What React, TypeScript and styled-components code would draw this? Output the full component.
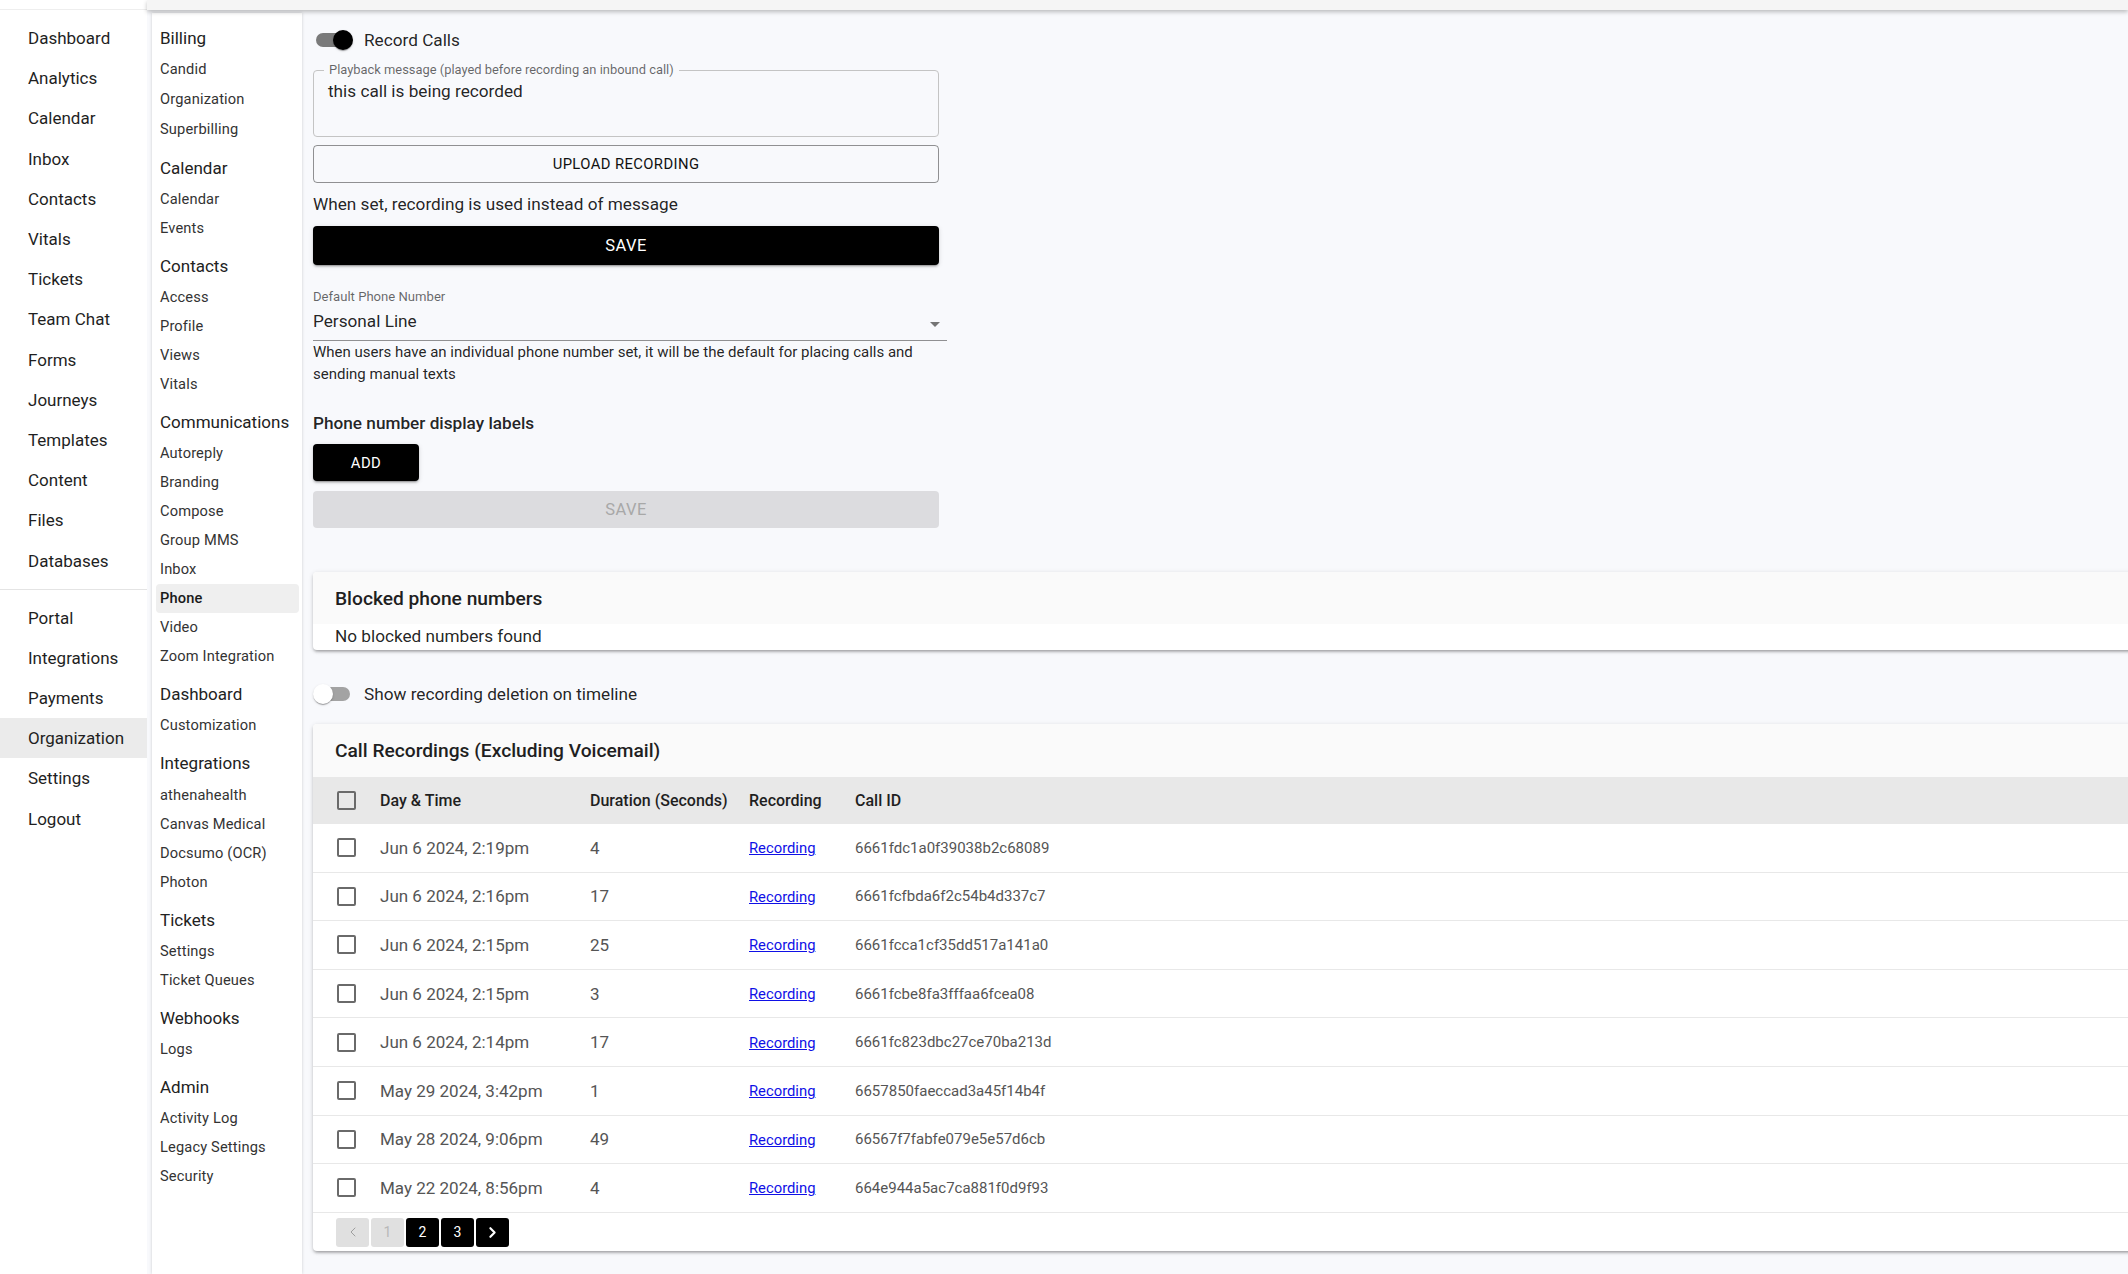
import React from "react";
import styled, { createGlobalStyle } from "styled-components";
import {
  LayoutDashboard,
  TrendingUp,
  Calendar,
  Inbox,
  Users,
  Activity,
  Ticket,
  MessageSquare,
  FileText,
  Map,
  LayoutTemplate,
  Image,
  Folder,
  Database,
  Globe,
  Plug,
  CreditCard,
  Building2,
  Settings,
  LogOut,
  ChevronLeft,
  ChevronRight,
} from "lucide-react";

const GlobalStyle = createGlobalStyle`
  html, body {
    margin: 0;
    padding: 0;
    height: 100%;
    overflow: hidden;
  }
  body {
    font-family: Roboto, "Noto Sans", "Liberation Sans", sans-serif;
    background: #f8f9fc;
    color: rgba(0, 0, 0, 0.87);
  }
`;

const Page = styled.div`
  display: flex;
  height: 100vh;
`;

const LeftNav = styled.nav`
  width: 147px;
  flex-shrink: 0;
  background: #fff;
  overflow: hidden;
`;

const NavTopStrip = styled.div`
  height: 10px;
  box-sizing: border-box;
  border-bottom: 1px solid #eeeeee;
`;

const NavList = styled.div`
  padding-top: 8px;
`;

const NavItem = styled.div<{ $active?: boolean }>`
  height: 40.2px;
  display: flex;
  align-items: center;
  font-size: 17px;
  color: #1f1f1f;
  background: ${(p) => (p.$active ? "#ebebeb" : "transparent")};
  white-space: nowrap;
`;

const NavIcon = styled.span`
  display: flex;
  width: 24px;
  margin-left: -22px;
  margin-right: 26px;
  color: #a8a8a8;
`;

const NavDivider = styled.div`
  height: 1px;
  background: #e4e4e4;
  margin: 8px 0;
`;

const RightCol = styled.div`
  flex: 1;
  min-width: 0;
  display: flex;
  flex-direction: column;
`;

const TopStrip = styled.div`
  height: 10px;
  flex-shrink: 0;
  background: #f5f5f5;
  box-shadow: 0 2px 4px rgba(0, 0, 0, 0.25);
  position: relative;
  z-index: 2;
`;

const Body = styled.div`
  flex: 1;
  min-height: 0;
  display: flex;
`;

const SubNav = styled.aside`
  width: 150px;
  flex-shrink: 0;
  margin: 3px 0 0 5px;
  padding-top: 8px;
  background: #fff;
  box-shadow: 0 0 3px rgba(0, 0, 0, 0.18);
`;

const SubSection = styled.div`
  margin-bottom: 6px;
`;

const SubHeader = styled.div`
  height: 34.2px;
  line-height: 34.2px;
  padding-left: 8px;
  font-size: 17px;
  color: #222;
`;

const SubItem = styled.div<{ $active?: boolean; $tall?: boolean }>`
  height: ${(p) => (p.$tall ? 29.8 : 29)}px;
  line-height: ${(p) => (p.$tall ? 29.8 : 29)}px;
  margin: 0 3px 0 4px;
  padding-left: 4px;
  border-radius: 4px;
  font-size: 14.65px;
  letter-spacing: 0.15px;
  color: ${(p) => (p.$active ? "#1a1a1a" : "#333")};
  font-weight: ${(p) => (p.$active ? 500 : 400)};
  background: ${(p) => (p.$active ? "#efefef" : "transparent")};
  white-space: nowrap;
`;

const Main = styled.main`
  flex: 1;
  min-width: 0;
  padding: 11px 0 0 11px;
  display: flex;
  flex-direction: column;
  align-items: flex-start;
`;

const SwitchRow = styled.div<{ $mt?: number }>`
  display: flex;
  align-items: center;
  height: 38px;
  margin-top: ${(p) => p.$mt ?? 0}px;
`;

const SwitchTrack = styled.span<{ $on?: boolean }>`
  position: relative;
  width: 34px;
  height: 14px;
  margin-left: 3px;
  border-radius: 7px;
  background: ${(p) => (p.$on ? "#7a7a7a" : "#a3a3a3")};
`;

const SwitchThumb = styled.span<{ $on?: boolean }>`
  position: absolute;
  top: -3px;
  left: ${(p) => (p.$on ? 17 : -3)}px;
  width: 20px;
  height: 20px;
  border-radius: 50%;
  background: ${(p) => (p.$on ? "#000" : "#fff")};
  box-shadow: 0 2px 1px -1px rgba(0, 0, 0, 0.2), 0 1px 1px rgba(0, 0, 0, 0.14),
    0 1px 3px rgba(0, 0, 0, 0.12);
`;

const SwitchLabel = styled.span`
  margin-left: 14px;
  font-size: 17.2px;
`;

const Fieldset = styled.fieldset`
  width: 626px;
  box-sizing: border-box;
  margin: 4px 0 0;
  padding: 0 14px;
  border: 1px solid #c4c4c4;
  border-radius: 4px;
  min-width: 0;
`;

const Legend = styled.legend`
  font-size: 12.9px;
  line-height: 14px;
  color: rgba(0, 0, 0, 0.6);
  padding: 0 5px;
  margin-left: -4px;
`;

const FieldValue = styled.div`
  height: 59px;
  box-sizing: border-box;
  padding-top: 2px;
  line-height: 24px;
  font-size: 17.2px;
`;

const OutlinedButton = styled.button`
  width: 626px;
  height: 38px;
  margin-top: 8px;
  border: 1px solid rgba(0, 0, 0, 0.42);
  border-radius: 4px;
  background: transparent;
  font-family: inherit;
  font-size: 14.8px;
  letter-spacing: 0.4px;
  color: #111;
  text-transform: uppercase;
`;

const BodyText = styled.div`
  margin-top: 9px;
  line-height: 24px;
  font-size: 17.2px;
`;

const SolidButton = styled.button<{ $w: number; $h: number; $fs: number; $mt: number }>`
  width: ${(p) => p.$w}px;
  height: ${(p) => p.$h}px;
  margin-top: ${(p) => p.$mt}px;
  border: none;
  border-radius: 4px;
  background: #000;
  color: #fff;
  font-family: inherit;
  font-size: ${(p) => p.$fs}px;
  letter-spacing: 0.4px;
  text-transform: uppercase;
  box-shadow: 0 3px 1px -2px rgba(0, 0, 0, 0.2), 0 2px 2px rgba(0, 0, 0, 0.14),
    0 1px 5px rgba(0, 0, 0, 0.12);
`;

const DisabledButton = styled.button`
  width: 626px;
  height: 37px;
  margin-top: 10px;
  border: none;
  border-radius: 4px;
  background: #dcdcdf;
  color: #a8a8a8;
  font-family: inherit;
  font-size: 16.5px;
  letter-spacing: 0.4px;
`;

const SmallLabel = styled.div`
  margin-top: 25px;
  font-size: 13.1px;
  line-height: 14px;
  color: rgba(0, 0, 0, 0.6);
`;

const SelectRow = styled.div`
  width: 634px;
  margin-top: 5px;
  padding-bottom: 4px;
  display: flex;
  justify-content: space-between;
  align-items: flex-start;
  border-bottom: 1px solid rgba(0, 0, 0, 0.42);
  font-size: 17.2px;
  line-height: 24px;
`;

const SelectArrow = styled.svg`
  margin-top: 3px;
  fill: #757575;
`;

const HelperText = styled.div`
  width: 634px;
  margin-top: 0;
  font-size: 15px;
  line-height: 22px;
`;

const Heading = styled.div`
  margin-top: 26px;
  font-size: 17.2px;
  font-weight: 500;
  line-height: 24px;
`;

const Card = styled.section<{ $mt: number }>`
  align-self: stretch;
  margin-top: ${(p) => p.$mt}px;
  margin-right: -10px;
  background: #fff;
  border-radius: 4px;
  overflow: hidden;
  box-shadow: 0 3px 3px -2px rgba(0, 0, 0, 0.2), 0 2px 3px rgba(0, 0, 0, 0.14),
    0 1px 5px rgba(0, 0, 0, 0.12);
`;

const CardHeader = styled.div<{ $h: number }>`
  height: ${(p) => p.$h}px;
  display: flex;
  align-items: center;
  padding-left: 22px;
  background: #fafafa;
  font-size: 19.2px;
  font-weight: 500;
  color: #1f1f1f;
`;

const CardBody = styled.div`
  height: 26px;
  padding-left: 22px;
  font-size: 17.2px;
  line-height: 24px;
`;

const cols = "57px 210px 159px 106px 1fr";

const TableHead = styled.div`
  display: grid;
  grid-template-columns: ${cols};
  align-items: center;
  height: 47px;
  background: #e8e8e8;
  font-size: 16px;
  font-weight: 500;
  color: #1f1f1f;
`;

const TableRow = styled.div`
  display: grid;
  grid-template-columns: ${cols};
  align-items: center;
  height: 48.6px;
  box-sizing: border-box;
  border-bottom: 1px solid #e8e8e8;
`;

const Cell = styled.div`
  padding: 0 10px;
  white-space: nowrap;
`;

const CheckCell = styled.div`
  padding-left: 24px;
  display: flex;
`;

const CheckBox = styled.span`
  width: 19px;
  height: 19px;
  box-sizing: border-box;
  border: 2px solid #6a6a6a;
  border-radius: 2px;
`;

const DateText = styled(Cell)`
  font-size: 17px;
  color: #555;
`;

const LinkText = styled.a`
  color: #0f10e6;
  font-size: 14.8px;
  text-decoration: underline;
`;

const IdText = styled(Cell)`
  font-size: 15px;
  color: #555;
`;

const Pager = styled.div`
  display: flex;
  gap: 2px;
  padding: 5px 0 4px 23px;
`;

const PageButton = styled.span<{ $active?: boolean }>`
  width: 33px;
  height: 29px;
  display: flex;
  align-items: center;
  justify-content: center;
  border-radius: 3px;
  font-size: 14px;
  background: ${(p) => (p.$active ? "#000" : "#e0e0e0")};
  color: ${(p) => (p.$active ? "#fff" : "#b8b8b8")};
`;

const PrevIcon = styled(ChevronLeft)`
  color: #9e9e9e;
`;

const mainNav = [
  ["Dashboard", LayoutDashboard],
  ["Analytics", TrendingUp],
  ["Calendar", Calendar],
  ["Inbox", Inbox],
  ["Contacts", Users],
  ["Vitals", Activity],
  ["Tickets", Ticket],
  ["Team Chat", MessageSquare],
  ["Forms", FileText],
  ["Journeys", Map],
  ["Templates", LayoutTemplate],
  ["Content", Image],
  ["Files", Folder],
  ["Databases", Database],
] as const;

const lowerNav = [
  ["Portal", Globe],
  ["Integrations", Plug],
  ["Payments", CreditCard],
  ["Organization", Building2],
  ["Settings", Settings],
  ["Logout", LogOut],
] as const;

const subSections: { title: string; items: string[] }[] = [
  { title: "Billing", items: ["Candid", "Organization", "Superbilling"] },
  { title: "Calendar", items: ["Calendar", "Events"] },
  { title: "Contacts", items: ["Access", "Profile", "Views", "Vitals"] },
  {
    title: "Communications",
    items: ["Autoreply", "Branding", "Compose", "Group MMS", "Inbox", "Phone", "Video", "Zoom Integration"],
  },
  { title: "Dashboard", items: ["Customization"] },
  { title: "Integrations", items: ["athenahealth", "Canvas Medical", "Docsumo (OCR)", "Photon"] },
  { title: "Tickets", items: ["Settings", "Ticket Queues"] },
  { title: "Webhooks", items: ["Logs"] },
  { title: "Admin", items: ["Activity Log", "Legacy Settings", "Security"] },
];

const recordings = [
  ["Jun 6 2024, 2:19pm", "4", "6661fdc1a0f39038b2c68089"],
  ["Jun 6 2024, 2:16pm", "17", "6661fcfbda6f2c54b4d337c7"],
  ["Jun 6 2024, 2:15pm", "25", "6661fcca1cf35dd517a141a0"],
  ["Jun 6 2024, 2:15pm", "3", "6661fcbe8fa3fffaa6fcea08"],
  ["Jun 6 2024, 2:14pm", "17", "6661fc823dbc27ce70ba213d"],
  ["May 29 2024, 3:42pm", "1", "6657850faeccad3a45f14b4f"],
  ["May 28 2024, 9:06pm", "49", "66567f7fabfe079e5e57d6cb"],
  ["May 22 2024, 8:56pm", "4", "664e944a5ac7ca881f0d9f93"],
];

const Switch = ({ on, label, mt }: { on: boolean; label: string; mt?: number }) => (
  <SwitchRow $mt={mt}>
    <SwitchTrack $on={on}>
      <SwitchThumb $on={on} />
    </SwitchTrack>
    <SwitchLabel>{label}</SwitchLabel>
  </SwitchRow>
);

const App = () => {
  return (
    <Page>
      <GlobalStyle />
      <LeftNav>
        <NavTopStrip />
        <NavList>
          {mainNav.map(([name, Icon]) => (
            <NavItem key={name}>
              <NavIcon>
                <Icon size={22} strokeWidth={2} />
              </NavIcon>
              {name}
            </NavItem>
          ))}
          <NavDivider />
          {lowerNav.map(([name, Icon]) => (
            <NavItem key={name} $active={name === "Organization"}>
              <NavIcon>
                <Icon size={22} strokeWidth={2} />
              </NavIcon>
              {name}
            </NavItem>
          ))}
        </NavList>
      </LeftNav>

      <RightCol>
        <TopStrip />
        <Body>
          <SubNav>
            {subSections.map((s, i) => (
              <SubSection key={s.title}>
                <SubHeader>{s.title}</SubHeader>
                {s.items.map((item) => (
                  <SubItem
                    key={item}
                    $tall={i === 0}
                    $active={s.title === "Communications" && item === "Phone"}
                  >
                    {item}
                  </SubItem>
                ))}
              </SubSection>
            ))}
          </SubNav>

          <Main>
            <Switch on label="Record Calls" />
            <Fieldset>
              <Legend>Playback message (played before recording an inbound call)</Legend>
              <FieldValue>this call is being recorded</FieldValue>
            </Fieldset>
            <OutlinedButton>Upload Recording</OutlinedButton>
            <BodyText>When set, recording is used instead of message</BodyText>
            <SolidButton $w={626} $h={39} $fs={16.5} $mt={10}>
              Save
            </SolidButton>

            <SmallLabel>Default Phone Number</SmallLabel>
            <SelectRow>
              <span>Personal Line</span>
              <SelectArrow width="24" height="24" viewBox="0 0 24 24">
                <path d="M7 10l5 5 5-5z" />
              </SelectArrow>
            </SelectRow>
            <HelperText>
              When users have an individual phone number set, it will be the default for placing calls and
              sending manual texts
            </HelperText>

            <Heading>Phone number display labels</Heading>
            <SolidButton $w={106} $h={37} $fs={14.8} $mt={9}>
              Add
            </SolidButton>
            <DisabledButton disabled>SAVE</DisabledButton>

            <Card $mt={44}>
              <CardHeader $h={52}>Blocked phone numbers</CardHeader>
              <CardBody>No blocked numbers found</CardBody>
            </Card>

            <Switch on={false} label="Show recording deletion on timeline" mt={25} />

            <Card $mt={11}>
              <CardHeader $h={53}>Call Recordings (Excluding Voicemail)</CardHeader>
              <TableHead>
                <CheckCell>
                  <CheckBox />
                </CheckCell>
                <Cell>Day &amp; Time</Cell>
                <Cell>Duration (Seconds)</Cell>
                <Cell>Recording</Cell>
                <Cell>Call ID</Cell>
              </TableHead>
              {recordings.map(([date, duration, id]) => (
                <TableRow key={id}>
                  <CheckCell>
                    <CheckBox />
                  </CheckCell>
                  <DateText>{date}</DateText>
                  <DateText>{duration}</DateText>
                  <Cell>
                    <LinkText href="#">Recording</LinkText>
                  </Cell>
                  <IdText>{id}</IdText>
                </TableRow>
              ))}
              <Pager>
                <PageButton>
                  <PrevIcon size={16} strokeWidth={1.5} />
                </PageButton>
                <PageButton>1</PageButton>
                <PageButton $active>2</PageButton>
                <PageButton $active>3</PageButton>
                <PageButton $active>
                  <ChevronRight size={17} strokeWidth={3} />
                </PageButton>
              </Pager>
            </Card>
          </Main>
        </Body>
      </RightCol>
    </Page>
  );
};

export default App;
